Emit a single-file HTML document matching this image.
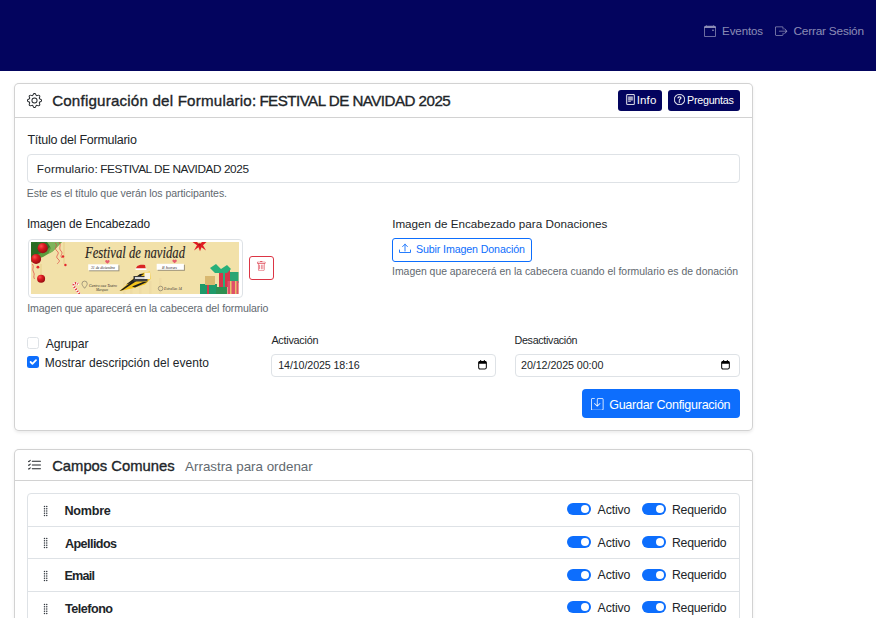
<!DOCTYPE html>
<html><head><meta charset="utf-8"><style>
html,body{margin:0;padding:0;background:#fff;width:876px;height:618px;overflow:hidden;position:relative}
.a{position:absolute}
.t{position:absolute;white-space:nowrap;line-height:1;font-family:"Liberation Sans",sans-serif}
</style></head><body>
<div class="a" style="left:0px;top:0px;width:876px;height:71px;background:#03045e"></div>
<svg class="a" style="left:704px;top:25px;" width="12" height="12" viewBox="0 0 16 16" fill="rgba(255,255,255,.55)"><path d="M11 6.5a.5.5 0 0 1 .5-.5h1a.5.5 0 0 1 .5.5v1a.5.5 0 0 1-.5.5h-1a.5.5 0 0 1-.5-.5z"/><path d="M3.5 0a.5.5 0 0 1 .5.5V1h8V.5a.5.5 0 0 1 1 0V1h1a2 2 0 0 1 2 2v11a2 2 0 0 1-2 2H2a2 2 0 0 1-2-2V3a2 2 0 0 1 2-2h1V.5a.5.5 0 0 1 .5-.5M1 4v10a1 1 0 0 0 1 1h12a1 1 0 0 0 1-1V4z"/></svg>
<svg class="a" style="left:775.3px;top:24.8px;" width="12.3" height="12.3" viewBox="0 0 16 16" fill="rgba(255,255,255,.55)"><path fill-rule="evenodd" d="M10 12.5a.5.5 0 0 1-.5.5h-8a.5.5 0 0 1-.5-.5v-9a.5.5 0 0 1 .5-.5h8a.5.5 0 0 1 .5.5v2a.5.5 0 0 0 1 0v-2A1.5 1.5 0 0 0 9.5 2h-8A1.5 1.5 0 0 0 0 3.5v9A1.5 1.5 0 0 0 1.5 14h8a1.5 1.5 0 0 0 1.5-1.5v-2a.5.5 0 0 0-1 0z"/><path fill-rule="evenodd" d="M15.854 8.354a.5.5 0 0 0 0-.708l-3-3a.5.5 0 0 0-.708.708L14.293 7.5H5.5a.5.5 0 0 0 0 1h8.793l-2.147 2.146a.5.5 0 0 0 .708.708z"/></svg>
<div class="a" style="left:14px;top:83px;width:739px;height:348px;border:1px solid rgba(0,0,0,.175);border-radius:5px;box-sizing:border-box;box-shadow:0 1.6px 3.2px rgba(0,0,0,.075);background:#fff"></div>
<div class="a" style="left:15px;top:117px;width:737px;height:1px;background:rgba(0,0,0,.175)"></div>
<svg class="a" style="left:27px;top:93px;" width="15" height="15" viewBox="0 0 16 16" fill="#212529"><path d="M8 4.754a3.246 3.246 0 1 0 0 6.492 3.246 3.246 0 0 0 0-6.492M5.754 8a2.246 2.246 0 1 1 4.492 0 2.246 2.246 0 0 1-4.492 0"/><path d="M9.796 1.343c-.527-1.79-3.065-1.79-3.592 0l-.094.319a.873.873 0 0 1-1.255.52l-.292-.16c-1.64-.892-3.433.902-2.54 2.541l.159.292a.873.873 0 0 1-.52 1.255l-.319.094c-1.79.527-1.790 3.065 0 3.592l.319.094a.873.873 0 0 1 .52 1.255l-.16.292c-.892 1.64.901 3.434 2.541 2.54l.292-.159a.873.873 0 0 1 1.255.52l.094.319c.527 1.79 3.065 1.79 3.592 0l.094-.319a.873.873 0 0 1 1.255-.52l.292.16c1.64.893 3.434-.902 2.54-2.541l-.159-.292a.873.873 0 0 1 .52-1.255l.319-.094c1.79-.527 1.79-3.065 0-3.592l-.319-.094a.873.873 0 0 1-.52-1.255l.16-.292c.893-1.64-.902-3.433-2.541-2.54l-.292.159a.873.873 0 0 1-1.255-.52zm-2.633.283c.246-.835 1.428-.835 1.674 0l.094.319a1.873 1.873 0 0 0 2.693 1.115l.291-.16c.764-.415 1.6.42 1.184 1.185l-.159.292a1.873 1.873 0 0 0 1.116 2.692l.318.094c.835.246.835 1.428 0 1.674l-.319.094a1.873 1.873 0 0 0-1.115 2.693l.16.291c.415.764-.42 1.6-1.185 1.184l-.291-.159a1.873 1.873 0 0 0-2.693 1.116l-.094.318c-.246.835-1.428.835-1.674 0l-.094-.319a1.873 1.873 0 0 0-2.692-1.115l-.292.16c-.764.415-1.6-.42-1.184-1.185l.159-.291A1.873 1.873 0 0 0 1.945 8.930l-.319-.094c-.835-.246-.835-1.428 0-1.674l.319-.094A1.873 1.873 0 0 0 3.060 4.377l-.16-.292c-.415-.764.42-1.6 1.185-1.184l.292.159a1.873 1.873 0 0 0 2.692-1.115z"/></svg>
<div class="a" style="left:618px;top:90px;width:44px;height:21px;background:#03045e;border-radius:3px"></div>
<svg class="a" style="left:624.7px;top:93.5px;stroke:#fff;stroke-width:.35" width="11" height="11" viewBox="0 0 16 16" fill="#fff"><path d="M5 4a.5.5 0 0 0 0 1h6a.5.5 0 0 0 0-1zm-.5 2.5A.5.5 0 0 1 5 6h6a.5.5 0 0 1 0 1H5a.5.5 0 0 1-.5-.5M5 8a.5.5 0 0 0 0 1h6a.5.5 0 0 0 0-1zm0 2a.5.5 0 0 0 0 1h3a.5.5 0 0 0 0-1z"/><path d="M2 2a2 2 0 0 1 2-2h8a2 2 0 0 1 2 2v12a2 2 0 0 1-2 2H4a2 2 0 0 1-2-2zm10-1H4a1 1 0 0 0-1 1v12a1 1 0 0 0 1 1h8a1 1 0 0 0 1-1V2a1 1 0 0 0-1-1"/></svg>
<div class="a" style="left:668px;top:90px;width:72px;height:21px;background:#03045e;border-radius:3px"></div>
<svg class="a" style="left:673.5px;top:93.5px;stroke:#fff;stroke-width:.35" width="11" height="11" viewBox="0 0 16 16" fill="#fff"><path d="M8 15A7 7 0 1 1 8 1a7 7 0 0 1 0 14m0 1A8 8 0 1 0 8 0a8 8 0 0 0 0 16"/><path d="M5.255 5.786a.237.237 0 0 0 .241.247h.825c.138 0 .248-.113.266-.25.09-.656.54-1.134 1.342-1.134.686 0 1.314.343 1.314 1.168 0 .635-.374.927-.965 1.371-.673.489-1.206 1.06-1.168 1.987l.003.217a.25.25 0 0 0 .25.246h.811a.25.25 0 0 0 .25-.25v-.105c0-.718.273-.927 1.01-1.486.609-.463 1.244-.977 1.244-2.056 0-1.511-1.276-2.241-2.673-2.241-1.267 0-2.655.59-2.75 2.286m1.557 5.763c0 .533.425.927 1.01.927.609 0 1.028-.394 1.028-.927 0-.552-.42-.94-1.029-.94-.584 0-1.009.388-1.009.94"/></svg>
<div class="a" style="left:27px;top:154px;width:713px;height:29px;border:1px solid #dee2e6;border-radius:4px;box-sizing:border-box"></div>
<div class="a" style="left:27.5px;top:238.5px;width:215.0px;height:59.0px;border:1px solid #dee2e6;border-radius:4px;box-sizing:border-box;background:#fff"></div>
<svg class="a" style="left:31px;top:242px" width="208" height="52" viewBox="0 0 208 52"><defs>
<radialGradient id="rb" cx="35%" cy="30%" r="70%"><stop offset="0" stop-color="#ff5050"/><stop offset=".45" stop-color="#d8191f"/><stop offset="1" stop-color="#9a0d12"/></radialGradient>
</defs>
<rect width="208" height="52" fill="#f2e1a9"/>
<g fill="#eedba4"><rect x="92" y="38" width="2.5" height="14"/><rect x="99" y="35" width="2.5" height="17"/><rect x="108" y="37" width="2.5" height="15"/><rect x="118" y="39" width="2.5" height="13"/><rect x="128" y="36" width="2.5" height="16"/></g>
<!-- pine branches -->
<path d="M0 0H31L27 4 22 9 17 12 12 15 6 17 0 20Z" fill="#5c9b3c"/>
<path d="M0 0H22L18 6 12 10 6 13 0 14Z" fill="#2f7428"/>
<path d="M16 0H30L26 5 21 10 17 12 20 6Z" fill="#7fb35a"/>
<path d="M0 2 6 0 9 7 5 14 0 17Z" fill="#2a6a22"/>
<!-- streamers -->
<g fill="none" stroke="#e0433f" stroke-width=".8" opacity=".85">
<path d="M24 1c4 2 -2 5 2 8s-3 5 1 8 -2 4 0 5"/>
<path d="M28 0c3 3 -1 6 2 9s-2 4 1 7"/>
<path d="M1.5 22c2 3 -1 5 1 8s-1 4 1 7"/>
</g>
<g stroke="#d4b050" stroke-width=".35"><line x1="10" y1="22" x2="10" y2="33"/><line x1="33" y1="0" x2="33" y2="22"/></g>
<!-- balls -->
<circle cx="11.7" cy="6.2" r="5.1" fill="url(#rb)"/>
<circle cx="5.1" cy="17" r="5" fill="url(#rb)"/>
<circle cx="10.1" cy="36.7" r="4" fill="url(#rb)"/>
<!-- stars -->
<g fill="#e3262c"><circle cx="32" cy="14.5" r="1.2"/><circle cx="34.4" cy="23" r="1.2"/><circle cx="6.9" cy="25.2" r="1.4"/></g>
<!-- candy cane -->
<path d="M48.5 52 43 44.5c-1.5-2.5 1.5-4.5 4-2.5" fill="none" stroke="#fff" stroke-width="2.3" stroke-linecap="round"/>
<path d="M48.5 52 43 44.5c-1.5-2.5 1.5-4.5 4-2.5" fill="none" stroke="#e23a3a" stroke-width="2.3" stroke-dasharray="1.3 1.3"/>
<!-- title -->
<text x="54" y="15.6" font-family="Liberation Serif" font-style="italic" font-size="16" fill="#2b2522" textLength="100" lengthAdjust="spacingAndGlyphs" stroke="#2b2522" stroke-width=".15">Festival de navidad</text>
<!-- labels -->
<rect x="58.2" y="23.3" width="30.2" height="6" fill="#7d776b" opacity=".75"/>
<rect x="57.2" y="22.3" width="30.2" height="6" fill="#fff"/>
<rect x="126.7" y="22.8" width="27.2" height="6" fill="#7d776b" opacity=".75"/>
<rect x="125.7" y="21.8" width="27.2" height="6" fill="#fff"/>
<text x="60" y="27.2" font-family="Liberation Serif" font-style="italic" font-size="4.6" fill="#2b2522" textLength="24" lengthAdjust="spacingAndGlyphs">31 de diciembre</text>
<text x="131" y="26.7" font-family="Liberation Serif" font-style="italic" font-size="4.6" fill="#2b2522" textLength="15" lengthAdjust="spacingAndGlyphs">8 horas</text>
<!-- hearts -->
<g fill="#e65c6c"><path d="M76.4 21.8l-2-1.8a1.1 1.1 0 0 1 2-1.3 1.1 1.1 0 0 1 2 1.3z"/><path d="M143.6 21.3l-2-1.8a1.1 1.1 0 0 1 2-1.3 1.1 1.1 0 0 1 2 1.3z"/></g>
<!-- logo -->
<path d="M88.5 49 104 35 113 30.5 119 29.5 119.5 37 114 42.5 101 46.5Z" fill="#f4c41c"/>
<path d="M88.5 49 103 38 107 38 92 48Z" fill="#1d1d1d"/>
<path d="M95 42.5 109 32 113.5 31.5 98.5 41.5Z" fill="#1d1d1d"/>
<path d="M101 44.5 112 40 116 40 104 45.5Z" fill="#1d1d1d"/>
<path d="M102.5 34h14v5.5h-14z" fill="#3c3c3c"/>
<path d="M104 35h11v2h-11z" fill="#d8d8d8"/>
<path d="M113.5 30.5h5.5v6.5h-5.5z" fill="#f8f2e2"/>
<path d="M105 27c0-3.5 4-5 9-4l.8 4Z" fill="#d92525"/>
<rect x="104.5" y="26.3" width="11" height="1.8" rx=".9" fill="#fff"/>
<!-- pin + texts -->
<g fill="none" stroke="#6e6a60" stroke-width=".6"><path d="M53.6 46.3c-2-2.5-2.6-3.4-2.6-4.6a2.6 2.6 0 0 1 5.2 0c0 1.2-.6 2.1-2.6 4.6z"/><circle cx="129.6" cy="46.5" r="2.3"/></g>
<text x="58" y="45.2" font-family="Liberation Serif" font-style="italic" font-size="4.2" fill="#3a3430" textLength="28" lengthAdjust="spacingAndGlyphs">Centro oea Teatro</text>
<text x="65" y="49" font-family="Liberation Serif" font-style="italic" font-size="4.2" fill="#3a3430" textLength="12" lengthAdjust="spacingAndGlyphs">Marquez</text>
<text x="133" y="48" font-family="Liberation Serif" font-style="italic" font-size="4.4" fill="#3a3430" textLength="18" lengthAdjust="spacingAndGlyphs">Estrellas 14</text>
<!-- gifts -->
<path d="M169 42h17v10h-17z" fill="#1f9a6a"/>
<path d="M176 42h2v10h-2z" fill="#d7364a"/>
<path d="M174 34h10v9h-10z" fill="#d9b870"/>
<path d="M188 28h11v17h-11z" fill="#d7364a"/>
<path d="M199 30h8.5v11h-8.5z" fill="#2aa574"/>
<path d="M196.5 39h11v13h-11z" fill="#e0506a"/>
<path d="M199 39h1.5v13H199zM204 39h1.5v13H204z" fill="#e8c36a"/>
<path d="M185 45h11v7h-11z" fill="#2f8f52"/>
<path d="M179 26l6-4 5 5 6-4 4 4-4 4h-12z" fill="#28b07a"/>
<path d="M192 28h2v17h-2z" fill="#2bb07a"/>
<path d="M161.5 0h4.5l2.5 2.5 2.5-2.5h4.5l-3.5 3.2 3 5.3-4.5-3.2-1.5 4-1.5-4-4.5 3.2 3-5.3z" fill="#e01b22"/><circle cx="168.5" cy="2.5" r="1.3" fill="#b5121a"/>
</svg>
<div class="a" style="left:249px;top:256px;width:25px;height:24px;border:1px solid #dc3545;border-radius:3px;box-sizing:border-box"></div>
<svg class="a" style="left:255.8px;top:261px;opacity:.85" width="10.5" height="10.5" viewBox="0 0 16 16" fill="#dc3545"><path d="M5.5 5.5A.5.5 0 0 1 6 6v6a.5.5 0 0 1-1 0V6a.5.5 0 0 1 .5-.5m2.5 0a.5.5 0 0 1 .5.5v6a.5.5 0 0 1-1 0V6a.5.5 0 0 1 .5-.5m3 .5a.5.5 0 0 0-1 0v6a.5.5 0 0 0 1 0z"/><path d="M14.5 3a1 1 0 0 1-1 1H13v9a2 2 0 0 1-2 2H5a2 2 0 0 1-2-2V4h-.5a1 1 0 0 1-1-1V2a1 1 0 0 1 1-1H6a1 1 0 0 1 1-1h2a1 1 0 0 1 1 1h3.5a1 1 0 0 1 1 1zM4.118 4 4 4.059V13a1 1 0 0 0 1 1h6a1 1 0 0 0 1-1V4.059L11.882 4zM2.5 3h11V2h-11z"/></svg>
<div class="a" style="left:392px;top:238px;width:140px;height:24px;border:1px solid #0d6efd;border-radius:3px;box-sizing:border-box"></div>
<svg class="a" style="left:398px;top:243px" width="14" height="11" viewBox="0 0 14 11" fill="none" stroke="#0d6efd" stroke-width=".9" stroke-linecap="round" stroke-linejoin="round"><path d="M1.5 7v2.5h11V7"/><path d="M7 8V1.2M4.6 3.6 7 1.2l2.4 2.4"/></svg>
<div class="a" style="left:27px;top:337px;width:12px;height:12px;border:1px solid #dee2e6;border-radius:2.5px;box-sizing:border-box;background:#fff"></div>
<div class="a" style="left:27px;top:356px;width:12px;height:12px;background:#0d6efd;border-radius:2.5px"></div>
<svg class="a" style="left:27px;top:356px" width="12" height="12" viewBox="0 0 20 20"><path fill="none" stroke="#fff" stroke-linecap="round" stroke-linejoin="round" stroke-width="3" d="m6 10 3 3 6-6"/></svg>
<div class="a" style="left:271px;top:354px;width:225px;height:23px;border:1px solid #dee2e6;border-radius:4px;box-sizing:border-box"></div>
<div class="a" style="left:514.5px;top:354px;width:225.0px;height:23px;border:1px solid #dee2e6;border-radius:4px;box-sizing:border-box"></div>
<svg class="a" style="left:478.3px;top:360px" width="9" height="10" viewBox="0 0 9 10"><rect x=".65" y="1.4" width="7.7" height="7.5" rx="1.3" fill="none" stroke="#111" stroke-width="1.05"/><path d="M.6 2.4a1.3 1.3 0 0 1 1.3-1.3h5.2a1.3 1.3 0 0 1 1.3 1.3v1.4H.6z" fill="#000"/><rect x="2" y=".2" width="1.2" height="1.2" fill="#000"/><rect x="5.8" y=".2" width="1.2" height="1.2" fill="#000"/></svg>
<svg class="a" style="left:721.3px;top:360px" width="9" height="10" viewBox="0 0 9 10"><rect x=".65" y="1.4" width="7.7" height="7.5" rx="1.3" fill="none" stroke="#111" stroke-width="1.05"/><path d="M.6 2.4a1.3 1.3 0 0 1 1.3-1.3h5.2a1.3 1.3 0 0 1 1.3 1.3v1.4H.6z" fill="#000"/><rect x="2" y=".2" width="1.2" height="1.2" fill="#000"/><rect x="5.8" y=".2" width="1.2" height="1.2" fill="#000"/></svg>
<div class="a" style="left:582px;top:389px;width:158px;height:29px;background:#0d6efd;border-radius:4px"></div>
<svg class="a" style="left:591.3px;top:397.8px;" width="12.5" height="12.5" viewBox="0 0 16 16" fill="#fff"><path d="M2 1a1 1 0 0 0-1 1v12a1 1 0 0 0 1 1h12a1 1 0 0 0 1-1V2a1 1 0 0 0-1-1H9.5a1 1 0 0 0-1 1v7.293l2.646-2.647a.5.5 0 0 1 .708.708l-3.5 3.5a.5.5 0 0 1-.708 0l-3.5-3.5a.5.5 0 1 1 .708-.708L7.5 9.293V2a2 2 0 0 1 2-2H14a2 2 0 0 1 2 2v12a2 2 0 0 1-2 2H2a2 2 0 0 1-2-2V2a2 2 0 0 1 2-2h2.5a.5.5 0 0 1 0 1z"/></svg>
<div class="a" style="left:14px;top:449px;width:739px;height:191px;border:1px solid rgba(0,0,0,.175);border-radius:5px;box-sizing:border-box;box-shadow:0 1.6px 3.2px rgba(0,0,0,.075);background:#fff"></div>
<div class="a" style="left:15px;top:480px;width:737px;height:1px;background:rgba(0,0,0,.175)"></div>
<svg class="a" style="left:27.3px;top:457.5px;" width="15" height="15" viewBox="0 0 16 16" fill="#212529"><path fill-rule="evenodd" d="M5 11.5a.5.5 0 0 1 .5-.5h9a.5.5 0 0 1 0 1h-9a.5.5 0 0 1-.5-.5m0-4a.5.5 0 0 1 .5-.5h9a.5.5 0 0 1 0 1h-9a.5.5 0 0 1-.5-.5m0-4a.5.5 0 0 1 .5-.5h9a.5.5 0 0 1 0 1h-9a.5.5 0 0 1-.5-.5M3.854 2.146a.5.5 0 0 1 0 .708l-1.5 1.5a.5.5 0 0 1-.708 0l-.5-.5a.5.5 0 1 1 .708-.708L2 3.293l1.146-1.147a.5.5 0 0 1 .708 0m0 4a.5.5 0 0 1 0 .708l-1.5 1.5a.5.5 0 0 1-.708 0l-.5-.5a.5.5 0 1 1 .708-.708L2 7.293l1.146-1.147a.5.5 0 0 1 .708 0m0 4a.5.5 0 0 1 0 .708l-1.5 1.5a.5.5 0 0 1-.708 0l-.5-.5a.5.5 0 0 1 .708-.708l.146.147 1.146-1.147a.5.5 0 0 1 .708 0"/></svg>
<div class="a" style="left:27px;top:493px;width:713px;height:147px;border:1px solid #dee2e6;border-radius:4px;box-sizing:border-box"></div>
<svg class="a" style="left:39.5px;top:504.5px;" width="12" height="12" viewBox="0 0 16 16" fill="#343a40"><path d="M7 2a1 1 0 1 1-2 0 1 1 0 0 1 2 0m3 0a1 1 0 1 1-2 0 1 1 0 0 1 2 0M7 5a1 1 0 1 1-2 0 1 1 0 0 1 2 0m3 0a1 1 0 1 1-2 0 1 1 0 0 1 2 0M7 8a1 1 0 1 1-2 0 1 1 0 0 1 2 0m3 0a1 1 0 1 1-2 0 1 1 0 0 1 2 0m-3 3a1 1 0 1 1-2 0 1 1 0 0 1 2 0m3 0a1 1 0 1 1-2 0 1 1 0 0 1 2 0m-3 3a1 1 0 1 1-2 0 1 1 0 0 1 2 0m3 0a1 1 0 1 1-2 0 1 1 0 0 1 2 0"/></svg>
<div class="a" style="left:567px;top:503.0px;width:24px;height:12.0px;background:#0d6efd;border-radius:6px"></div>
<div class="a" style="left:581px;top:505.0px;width:8px;height:8.0px;background:#fff;border-radius:50%"></div>
<div class="a" style="left:642px;top:503.0px;width:24px;height:12.0px;background:#0d6efd;border-radius:6px"></div>
<div class="a" style="left:656px;top:505.0px;width:8px;height:8.0px;background:#fff;border-radius:50%"></div>
<div class="a" style="left:28px;top:526px;width:711px;height:1px;background:#dee2e6"></div>
<svg class="a" style="left:39.5px;top:537.25px;" width="12" height="12" viewBox="0 0 16 16" fill="#343a40"><path d="M7 2a1 1 0 1 1-2 0 1 1 0 0 1 2 0m3 0a1 1 0 1 1-2 0 1 1 0 0 1 2 0M7 5a1 1 0 1 1-2 0 1 1 0 0 1 2 0m3 0a1 1 0 1 1-2 0 1 1 0 0 1 2 0M7 8a1 1 0 1 1-2 0 1 1 0 0 1 2 0m3 0a1 1 0 1 1-2 0 1 1 0 0 1 2 0m-3 3a1 1 0 1 1-2 0 1 1 0 0 1 2 0m3 0a1 1 0 1 1-2 0 1 1 0 0 1 2 0m-3 3a1 1 0 1 1-2 0 1 1 0 0 1 2 0m3 0a1 1 0 1 1-2 0 1 1 0 0 1 2 0"/></svg>
<div class="a" style="left:567px;top:535.75px;width:24px;height:12.0px;background:#0d6efd;border-radius:6px"></div>
<div class="a" style="left:581px;top:537.75px;width:8px;height:8.0px;background:#fff;border-radius:50%"></div>
<div class="a" style="left:642px;top:535.75px;width:24px;height:12.0px;background:#0d6efd;border-radius:6px"></div>
<div class="a" style="left:656px;top:537.75px;width:8px;height:8.0px;background:#fff;border-radius:50%"></div>
<div class="a" style="left:28px;top:558px;width:711px;height:1px;background:#dee2e6"></div>
<svg class="a" style="left:39.5px;top:570.0px;" width="12" height="12" viewBox="0 0 16 16" fill="#343a40"><path d="M7 2a1 1 0 1 1-2 0 1 1 0 0 1 2 0m3 0a1 1 0 1 1-2 0 1 1 0 0 1 2 0M7 5a1 1 0 1 1-2 0 1 1 0 0 1 2 0m3 0a1 1 0 1 1-2 0 1 1 0 0 1 2 0M7 8a1 1 0 1 1-2 0 1 1 0 0 1 2 0m3 0a1 1 0 1 1-2 0 1 1 0 0 1 2 0m-3 3a1 1 0 1 1-2 0 1 1 0 0 1 2 0m3 0a1 1 0 1 1-2 0 1 1 0 0 1 2 0m-3 3a1 1 0 1 1-2 0 1 1 0 0 1 2 0m3 0a1 1 0 1 1-2 0 1 1 0 0 1 2 0"/></svg>
<div class="a" style="left:567px;top:568.5px;width:24px;height:12.0px;background:#0d6efd;border-radius:6px"></div>
<div class="a" style="left:581px;top:570.5px;width:8px;height:8.0px;background:#fff;border-radius:50%"></div>
<div class="a" style="left:642px;top:568.5px;width:24px;height:12.0px;background:#0d6efd;border-radius:6px"></div>
<div class="a" style="left:656px;top:570.5px;width:8px;height:8.0px;background:#fff;border-radius:50%"></div>
<div class="a" style="left:28px;top:591px;width:711px;height:1px;background:#dee2e6"></div>
<svg class="a" style="left:39.5px;top:602.75px;" width="12" height="12" viewBox="0 0 16 16" fill="#343a40"><path d="M7 2a1 1 0 1 1-2 0 1 1 0 0 1 2 0m3 0a1 1 0 1 1-2 0 1 1 0 0 1 2 0M7 5a1 1 0 1 1-2 0 1 1 0 0 1 2 0m3 0a1 1 0 1 1-2 0 1 1 0 0 1 2 0M7 8a1 1 0 1 1-2 0 1 1 0 0 1 2 0m3 0a1 1 0 1 1-2 0 1 1 0 0 1 2 0m-3 3a1 1 0 1 1-2 0 1 1 0 0 1 2 0m3 0a1 1 0 1 1-2 0 1 1 0 0 1 2 0m-3 3a1 1 0 1 1-2 0 1 1 0 0 1 2 0m3 0a1 1 0 1 1-2 0 1 1 0 0 1 2 0"/></svg>
<div class="a" style="left:567px;top:601.25px;width:24px;height:12.0px;background:#0d6efd;border-radius:6px"></div>
<div class="a" style="left:581px;top:603.25px;width:8px;height:8.0px;background:#fff;border-radius:50%"></div>
<div class="a" style="left:642px;top:601.25px;width:24px;height:12.0px;background:#0d6efd;border-radius:6px"></div>
<div class="a" style="left:656px;top:603.25px;width:8px;height:8.0px;background:#fff;border-radius:50%"></div>
<div class="t" style="left:722.08px;top:26.07px;font-size:11.49px;letter-spacing:-0.078px;color:rgba(255,255,255,.55);font-weight:400;">Eventos</div>
<div class="t" style="left:793.41px;top:25.89px;font-size:11.83px;letter-spacing:-0.193px;color:rgba(255,255,255,.55);font-weight:400;">Cerrar Sesión</div>
<div class="t" style="left:52.14px;top:92.87px;font-size:15.15px;letter-spacing:0.195px;color:#212529;font-weight:400;-webkit-text-stroke:.35px #212529;">Configuración del Formulario:</div>
<div class="t" style="left:259.39px;top:92.87px;font-size:15.15px;letter-spacing:-0.521px;color:#212529;font-weight:400;-webkit-text-stroke:.35px #212529;">FESTIVAL DE NAVIDAD 2025</div>
<div class="t" style="left:636.67px;top:94.86px;font-size:11.50px;letter-spacing:0.157px;color:#fff;font-weight:400;">Info</div>
<div class="t" style="left:687.04px;top:95.31px;font-size:10.73px;letter-spacing:-0.256px;color:#fff;font-weight:400;">Preguntas</div>
<div class="t" style="left:27.45px;top:134.01px;font-size:12.51px;letter-spacing:-0.261px;color:#212529;font-weight:400;">Título del Formulario</div>
<div class="t" style="left:36.86px;top:164.21px;font-size:11.80px;letter-spacing:0.131px;color:#212529;font-weight:400;">Formulario:</div>
<div class="t" style="left:100.26px;top:164.21px;font-size:11.80px;letter-spacing:-0.424px;color:#212529;font-weight:400;">FESTIVAL DE NAVIDAD 2025</div>
<div class="t" style="left:26.86px;top:188.26px;font-size:10.55px;letter-spacing:-0.086px;color:#62696f;font-weight:400;">Este es el título que verán los participantes.</div>
<div class="t" style="left:26.93px;top:219.06px;font-size:11.86px;letter-spacing:-0.111px;color:#212529;font-weight:400;">Imagen de Encabezado</div>
<div class="t" style="left:27.25px;top:302.95px;font-size:10.57px;letter-spacing:-0.089px;color:#62696f;font-weight:400;">Imagen que aparecerá en la cabecera del formulario</div>
<div class="t" style="left:392.15px;top:217.53px;font-size:11.66px;letter-spacing:0.017px;color:#212529;font-weight:400;">Imagen de Encabezado para Donaciones</div>
<div class="t" style="left:415.97px;top:244.37px;font-size:10.67px;letter-spacing:-0.122px;color:#0d6efd;font-weight:400;">Subir Imagen Donación</div>
<div class="t" style="left:392.06px;top:267.17px;font-size:10.43px;letter-spacing:-0.015px;color:#62696f;font-weight:400;">Imagen que aparecerá en la cabecera cuando el formulario es de donación</div>
<div class="t" style="left:45.70px;top:337.98px;font-size:12.19px;letter-spacing:-0.099px;color:#212529;font-weight:400;">Agrupar</div>
<div class="t" style="left:44.74px;top:356.95px;font-size:11.99px;letter-spacing:0.034px;color:#212529;font-weight:400;">Mostrar descripción del evento</div>
<div class="t" style="left:271.40px;top:334.53px;font-size:10.83px;letter-spacing:-0.252px;color:#212529;font-weight:400;">Activación</div>
<div class="t" style="left:278.25px;top:360.35px;font-size:10.69px;letter-spacing:-0.110px;color:#212529;font-weight:400;">14/10/2025 18:16</div>
<div class="t" style="left:514.54px;top:334.62px;font-size:10.73px;letter-spacing:-0.310px;color:#212529;font-weight:400;">Desactivación</div>
<div class="t" style="left:521.06px;top:360.31px;font-size:10.74px;letter-spacing:-0.084px;color:#212529;font-weight:400;">20/12/2025 00:00</div>
<div class="t" style="left:609.17px;top:398.98px;font-size:12.54px;letter-spacing:-0.269px;color:#fff;font-weight:400;">Guardar Configuración</div>
<div class="t" style="left:52.16px;top:458.86px;font-size:14.81px;letter-spacing:-0.007px;color:#212529;font-weight:400;-webkit-text-stroke:.35px #212529;">Campos Comunes</div>
<div class="t" style="left:185.10px;top:460.29px;font-size:13.36px;letter-spacing:-0.007px;color:#62696f;font-weight:400;">Arrastra para ordenar</div>
<div class="t" style="left:64.44px;top:504.93px;font-size:12.60px;letter-spacing:-0.244px;color:#212529;font-weight:700;">Nombre</div>
<div class="t" style="left:597.60px;top:503.86px;font-size:12.33px;letter-spacing:-0.168px;color:#212529;font-weight:400;">Activo</div>
<div class="t" style="left:672.02px;top:503.94px;font-size:12.24px;letter-spacing:-0.230px;color:#212529;font-weight:400;">Requerido</div>
<div class="t" style="left:64.95px;top:537.68px;font-size:12.60px;letter-spacing:-0.562px;color:#212529;font-weight:700;">Apellidos</div>
<div class="t" style="left:597.60px;top:536.61px;font-size:12.33px;letter-spacing:-0.168px;color:#212529;font-weight:400;">Activo</div>
<div class="t" style="left:672.02px;top:536.69px;font-size:12.24px;letter-spacing:-0.230px;color:#212529;font-weight:400;">Requerido</div>
<div class="t" style="left:64.44px;top:570.43px;font-size:12.60px;letter-spacing:-0.751px;color:#212529;font-weight:700;">Email</div>
<div class="t" style="left:597.60px;top:569.36px;font-size:12.33px;letter-spacing:-0.168px;color:#212529;font-weight:400;">Activo</div>
<div class="t" style="left:672.02px;top:569.44px;font-size:12.24px;letter-spacing:-0.230px;color:#212529;font-weight:400;">Requerido</div>
<div class="t" style="left:65.07px;top:603.18px;font-size:12.60px;letter-spacing:-0.507px;color:#212529;font-weight:700;">Telefono</div>
<div class="t" style="left:597.60px;top:602.11px;font-size:12.33px;letter-spacing:-0.168px;color:#212529;font-weight:400;">Activo</div>
<div class="t" style="left:672.02px;top:602.19px;font-size:12.24px;letter-spacing:-0.230px;color:#212529;font-weight:400;">Requerido</div>
</body></html>
